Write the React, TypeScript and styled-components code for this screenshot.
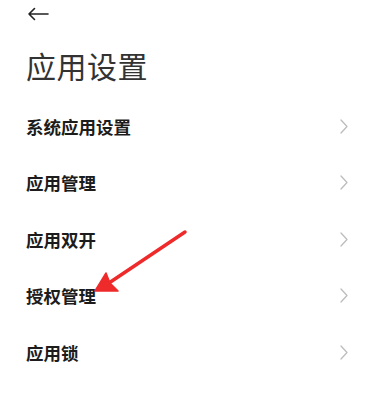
import styled, { createGlobalStyle } from 'styled-components';

const GlobalStyle = createGlobalStyle`
    html, body {
        margin: 0;
        padding: 0;
        background: #ffffff;
        font-family: "Noto Sans CJK SC", "Noto Sans", sans-serif;
    }
`;

const items = ['系统应用设置', '应用管理', '应用双开', '授权管理', '应用锁'];

const App = () => {
    return (
        <>
            <GlobalStyle />
            <Page>
                <TopBar>
                    <svg width="22" height="14" viewBox="0 0 22 14" fill="none">
                        <path d="M21 7H2M7.5 1.5L2 7l5.5 5.5" stroke="#222" strokeWidth="1.6" strokeLinecap="round" strokeLinejoin="round" />
                    </svg>
                </TopBar>
                <Title>应用设置</Title>
                <List>
                    {items.map(item => (
                        <Row key={item}>
                            <Label>{item}</Label>
                            <Chevron width="8" height="15" viewBox="0 0 8 15" fill="none">
                                <path d="M1 1l6 6.5L1 14" stroke="#bdbdbd" strokeWidth="1.3" strokeLinecap="round" strokeLinejoin="round" />
                            </Chevron>
                        </Row>
                    ))}
                </List>
                <Annotation width="375" height="398" viewBox="0 0 375 398">
                    <line x1="185" y1="232" x2="100" y2="289" stroke="#ee2a2a" strokeWidth="3.5" strokeLinecap="round" />
                    <path d="M95 291L106 273L110 283L118 291Z" fill="#ee2a2a" stroke="#ee2a2a" strokeWidth="1.5" strokeLinejoin="round" />
                </Annotation>
            </Page>
        </>
    );
};

export default App;

const Page = styled.div`
    position: relative;
    width: 375px;
    height: 398px;
    overflow: hidden;
    padding: 0 26px;
    box-sizing: border-box;
`

const TopBar = styled.div`
    height: 28px;
    display: flex;
    align-items: center;
    padding-left: 1px;
`

const Title = styled.div`
    margin-top: 17px;
    font-size: 30px;
    line-height: 40px;
    font-weight: 400;
    color: #333;
    letter-spacing: 0.5px;
`

const List = styled.div`
    margin-top: 13px;
    display: flex;
    flex-direction: column;
`

const Row = styled.div`
    height: 56.5px;
    display: flex;
    align-items: center;
    justify-content: space-between;
`

const Label = styled.span`
    font-size: 17.5px;
    font-weight: 700;
    color: #1c1c1c;
`

const Chevron = styled.svg`
    margin-right: 1px;
`

const Annotation = styled.svg`
    position: absolute;
    left: 0;
    top: 0;
    pointer-events: none;
`
